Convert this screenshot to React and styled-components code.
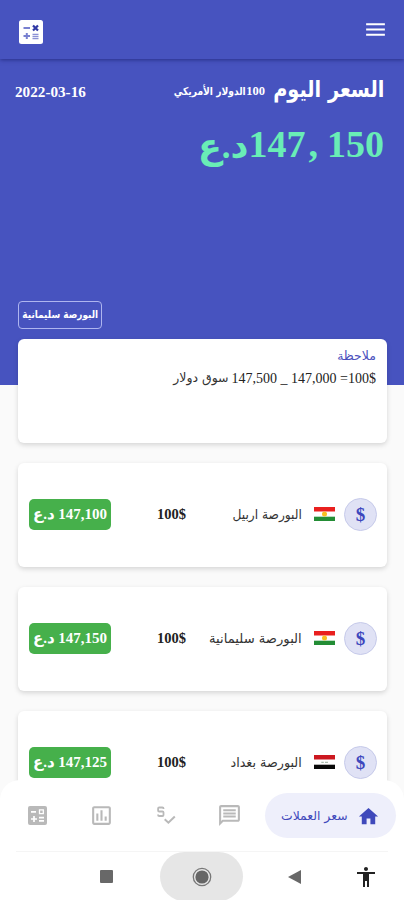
import React from "react";
import styled, { createGlobalStyle } from "styled-components";
import { MdMenu, MdHome, MdOutlineMessage, MdOutlinePoll, MdAccessibility } from "react-icons/md";

const Global = createGlobalStyle`
  *{box-sizing:border-box}
  body{margin:0;background:#fafafa}
`;

const Phone = styled.div`
  width: 404px;
  height: 900px;
  display: flex;
  flex-direction: column;
  overflow: hidden;
  background: #fafafa;
  font-family: "Liberation Serif", "DejaVu Sans", serif;
  font-weight: 700;
`;
const AppBar = styled.header`
  flex: none;
  height: 59px;
  padding: 4px 16px 0 19px;
  display: flex;
  align-items: center;
  justify-content: space-between;
  background: #4753bf;
  color: #fff;
  box-shadow: 0 1px 4px rgba(20, 25, 100, 0.6);
  z-index: 1;
`;
const MenuButton = styled.div`
  display: flex;
  margin-top: -4px;
`;
const Hero = styled.section`
  flex: none;
  height: 326px;
  padding: 14px 20px 56px 15px;
  display: flex;
  flex-direction: column;
  background: #4753bf;
  color: #fff;
`;
const HeroRow = styled.div`
  display: flex;
  align-items: center;
  height: 36px;
`;
const Label = styled.span`
  display: inline-block;
  white-space: nowrap;
  font-size: ${(p) => p.$size}px;
  line-height: 1;
  font-weight: ${(p) => p.$weight || 700};
  font-family: ${(p) => (p.$arabic ? '"DejaVu Sans"' : '"Liberation Serif", "DejaVu Sans"')}, serif;
  color: ${(p) => p.$color || "inherit"};
  transform: scaleX(${(p) => p.$stretch || 1});
  transform-origin: right center;
`;
const Slot = styled.div`
  flex: none;
  width: ${(p) => p.$width}px;
  margin-left: ${(p) => p.$after || 0}px;
  padding-bottom: ${(p) => p.$lift || 0}px;
  display: flex;
`;
const DateSlot = styled.div`
  margin-right: auto;
  padding-top: 1px;
  display: flex;
`;
const Price = styled.div`
  display: flex;
  align-items: center;
  height: 54px;
  margin-top: 8px;
  color: #69edb6;
`;
const Comma = styled.span`
  margin: 0 9px 0 3px;
`;
const Currency = styled.div`
  display: flex;
  padding-top: 5px;
`;
const Market = styled.div`
  margin-top: auto;
  align-self: flex-end;
  margin-left: 3px;
  width: 84px;
  height: 28px;
  flex: none;
  padding: 0 3px 1px 0;
  border: 1px solid #aeb5ef;
  border-radius: 4px;
  display: flex;
  align-items: center;
`;
const Content = styled.main`
  flex: 1;
  min-height: 0;
  margin: -46px 17px 0 18px;
  display: flex;
  flex-direction: column;
  gap: 20.5px;
`;
const Card = styled.article`
  flex: none;
  height: 103.5px;
  border-radius: 6px;
  background: #fff;
  box-shadow: 0 2px 5px rgba(0, 0, 0, 0.15);
`;
const Note = styled(Card)`
  padding: 11px 11px;
  display: flex;
  flex-direction: column;
  align-items: flex-start;
  gap: 9px;
`;
const NoteLine = styled.div`
  display: flex;
  align-items: center;
  gap: 3px;
`;
const Rate = styled(Card)`
  padding: 0 10px 0 11px;
  display: grid;
  grid-template-columns: 33px 30px 128px 1fr 82px;
  align-items: center;
`;
const Coin = styled.div`
  width: 33px;
  height: 33px;
  border: 1px solid #c6caea;
  border-radius: 50%;
  display: grid;
  place-items: center;
  background: #e0e2f5;
`;
const FlagSlot = styled.div`
  display: flex;
  padding: 0 9px 2px 0;
`;
const Place = styled.div`
  display: flex;
  padding-right: 12px;
`;
const Amount = styled.div`
  display: flex;
  padding-bottom: 1px;
`;
const Badge = styled.div`
  height: 31px;
  padding-bottom: 1px;
  border-radius: 5px;
  background: #46b04b;
  color: #fff;
  display: flex;
  align-items: center;
  justify-content: center;
`;
const Footer = styled.footer`
  flex: none;
  height: 120px;
  margin-top: -20px;
  background: #fff;
  border-radius: 20px 20px 0 0;
  position: relative;
`;
const Tabs = styled.nav`
  height: 71px;
  padding: 0 8px 0 25px;
  display: flex;
  align-items: center;
  gap: 39px;
  color: #b9b9b9;
`;
const Tab = styled.div`
  flex: none;
  width: 25px;
  height: 25px;
  display: grid;
  place-items: center;
`;
const ActiveTab = styled.div`
  flex: none;
  margin-left: -16px;
  width: 131px;
  height: 45px;
  padding: 2px 16px 0 16px;
  border-radius: 23px;
  display: flex;
  align-items: center;
  justify-content: space-between;
  background: #eeeffb;
  color: #3f49bb;
`;
const SystemBar = styled.div`
  height: 49px;
  margin: 0 16px;
  padding-left: 84px;
  border-top: 1px solid #f5f5f5;
  display: grid;
  grid-template-columns: 60px 128px 66px 24px;
  align-items: center;
`;
const HomeKey = styled.div`
  width: 83px;
  height: 49px;
  border-radius: 25px;
  background: #e6e6e6;
  display: grid;
  place-items: center;
`;

const CalcLogo = () => (
  <svg width="24" height="24" viewBox="0 0 24 24">
    <rect width="24" height="24" rx="2.5" fill="#fff" />
    <path d="M4.5 8h6.5M4.5 16h6.5M7.8 13v6" stroke="#7880d0" strokeWidth="2" />
    <path d="M14 5.5l5 5M19 5.5l-5 5" stroke="#3039a5" strokeWidth="2.2" />
    <path d="M13.5 14.3h6M13.5 16.5h6M13.5 18.6h6" stroke="#8b91d6" strokeWidth="1.3" />
  </svg>
);
const CalcIcon = () => (
  <svg width="19" height="19" viewBox="0 0 19 19">
    <rect width="19" height="19" rx="2" fill="#b9b9b9" />
    <path d="M3 5.8h5M3 13h6M6 10v6M11 11.6h5M11 14.8h5" stroke="#fff" strokeWidth="1.7" />
    <path d="M11.5 3.8h3.8v3.8h-3.8z" stroke="#fff" strokeWidth="1.3" fill="none" />
  </svg>
);
const PriceCheck = () => (
  <svg width="25" height="25" viewBox="0 0 25 25" fill="none" stroke="#b9b9b9" strokeWidth="1.8">
    <path d="M10.5 6V5.6q0-1.1-1.1-1.1H6.2q-1.1 0-1.1 1.1v1.8q0 1.1 1.1 1.1h3.2q1.1 0 1.1 1.1v2.3q0 1.1-1.1 1.1H6.2q-1.1 0-1.1-1.1v-.4" />
    <path d="M11.7 16.3l3.7 3.4 6.4-6.2" strokeWidth="2" />
  </svg>
);
const Flag = ({ iraq }) => (
  <svg width="21" height="14" viewBox="0 0 21 14">
    <rect width="21" height="14" fill="#fff" />
    <rect width="21" height="4.5" fill={iraq ? "#cc1820" : "#e9201f"} />
    <rect y="9.7" width="21" height="4.3" fill={iraq ? "#090909" : "#238d35"} />
    {iraq ? (
      <path d="M7.3 7.3h2.5M11 7.3h3" stroke="#8aa08d" strokeWidth="0.9" />
    ) : (
      <circle cx="10.5" cy="7.1" r="2.5" fill="#f8bf22" />
    )}
  </svg>
);

const rates = [
  { place: "البورصة اربيل", price: "147,100", stretch: 0.94 },
  { place: "البورصة سليمانية", price: "147,150", stretch: 1.01 },
  { place: "البورصة بغداد", price: "147,125", stretch: 0.98, iraq: true },
];

export default function App() {
  return (
    <Phone>
      <Global />
      <AppBar>
        <CalcLogo />
        <MenuButton><MdMenu size={25} /></MenuButton>
      </AppBar>
      <Hero dir="rtl">
        <HeroRow>
          <Slot $width={110} $after={9} $lift={4}>
            <Label $size={23} $arabic $stretch={0.84}>السعر اليوم</Label>
          </Slot>
          <Slot $width={19}><Label $size={12.5}>100</Label></Slot>
          <Slot $width={71}>
            <Label $size={11} $arabic $stretch={0.83}>الدولار الأمريكي</Label>
          </Slot>
          <DateSlot><Label $size={15.2} dir="ltr">2022-03-16</Label></DateSlot>
        </HeroRow>
        <Price>
          <Label $size={38} dir="ltr">147<Comma>,</Comma>150</Label>
          <Currency><Label $size={35}>د.ع</Label></Currency>
        </Price>
        <Market>
          <Label $size={10.5} $arabic $stretch={0.85}>البورصة سليمانية</Label>
        </Market>
      </Hero>
      <Content dir="rtl">
        <Note>
          <Label $size={12.5} $arabic $weight={400} $color="#4a50bd">ملاحظة</Label>
          <NoteLine>
            <Label $size={14} $weight={400} $color="#222">100$= 147,000 _ 147,500</Label>
            <Label $size={12.5} $arabic $weight={400} $color="#333">سوق دولار</Label>
          </NoteLine>
        </Note>
        {rates.map((r) => (
          <Rate key={r.place}>
            <Coin><Label $size={19} $color="#3c47bd">$</Label></Coin>
            <FlagSlot><Flag iraq={r.iraq} /></FlagSlot>
            <Place><Label $size={13} $arabic $weight={400} $color="#333" $stretch={r.stretch}>{r.place}</Label></Place>
            <Amount><Label $size={14.5} $color="#222">100$</Label></Amount>
            <Badge><Label $size={15}>{r.price} د.ع</Label></Badge>
          </Rate>
        ))}
      </Content>
      <Footer>
        <Tabs>
          <Tab><CalcIcon /></Tab>
          <Tab><MdOutlinePoll size={25} /></Tab>
          <Tab><PriceCheck /></Tab>
          <Tab><MdOutlineMessage size={25} /></Tab>
          <ActiveTab>
            <Label $size={12.4} $arabic $weight={400} dir="rtl">سعر العملات</Label>
            <MdHome size={23} />
          </ActiveTab>
        </Tabs>
        <SystemBar>
          <svg width="13" height="13"><rect width="13" height="13" rx="1" fill="#686868" /></svg>
          <HomeKey>
            <svg width="20" height="20" viewBox="0 0 20 20">
              <circle cx="10" cy="10" r="8.7" fill="none" stroke="#777" strokeWidth="1.3" />
              <circle cx="10" cy="10" r="6.6" fill="#666" />
            </svg>
          </HomeKey>
          <svg width="13" height="14"><path d="M13 0v14L0 7z" fill="#686868" /></svg>
          <MdAccessibility size={24} color="#222" />
        </SystemBar>
      </Footer>
    </Phone>
  );
}
